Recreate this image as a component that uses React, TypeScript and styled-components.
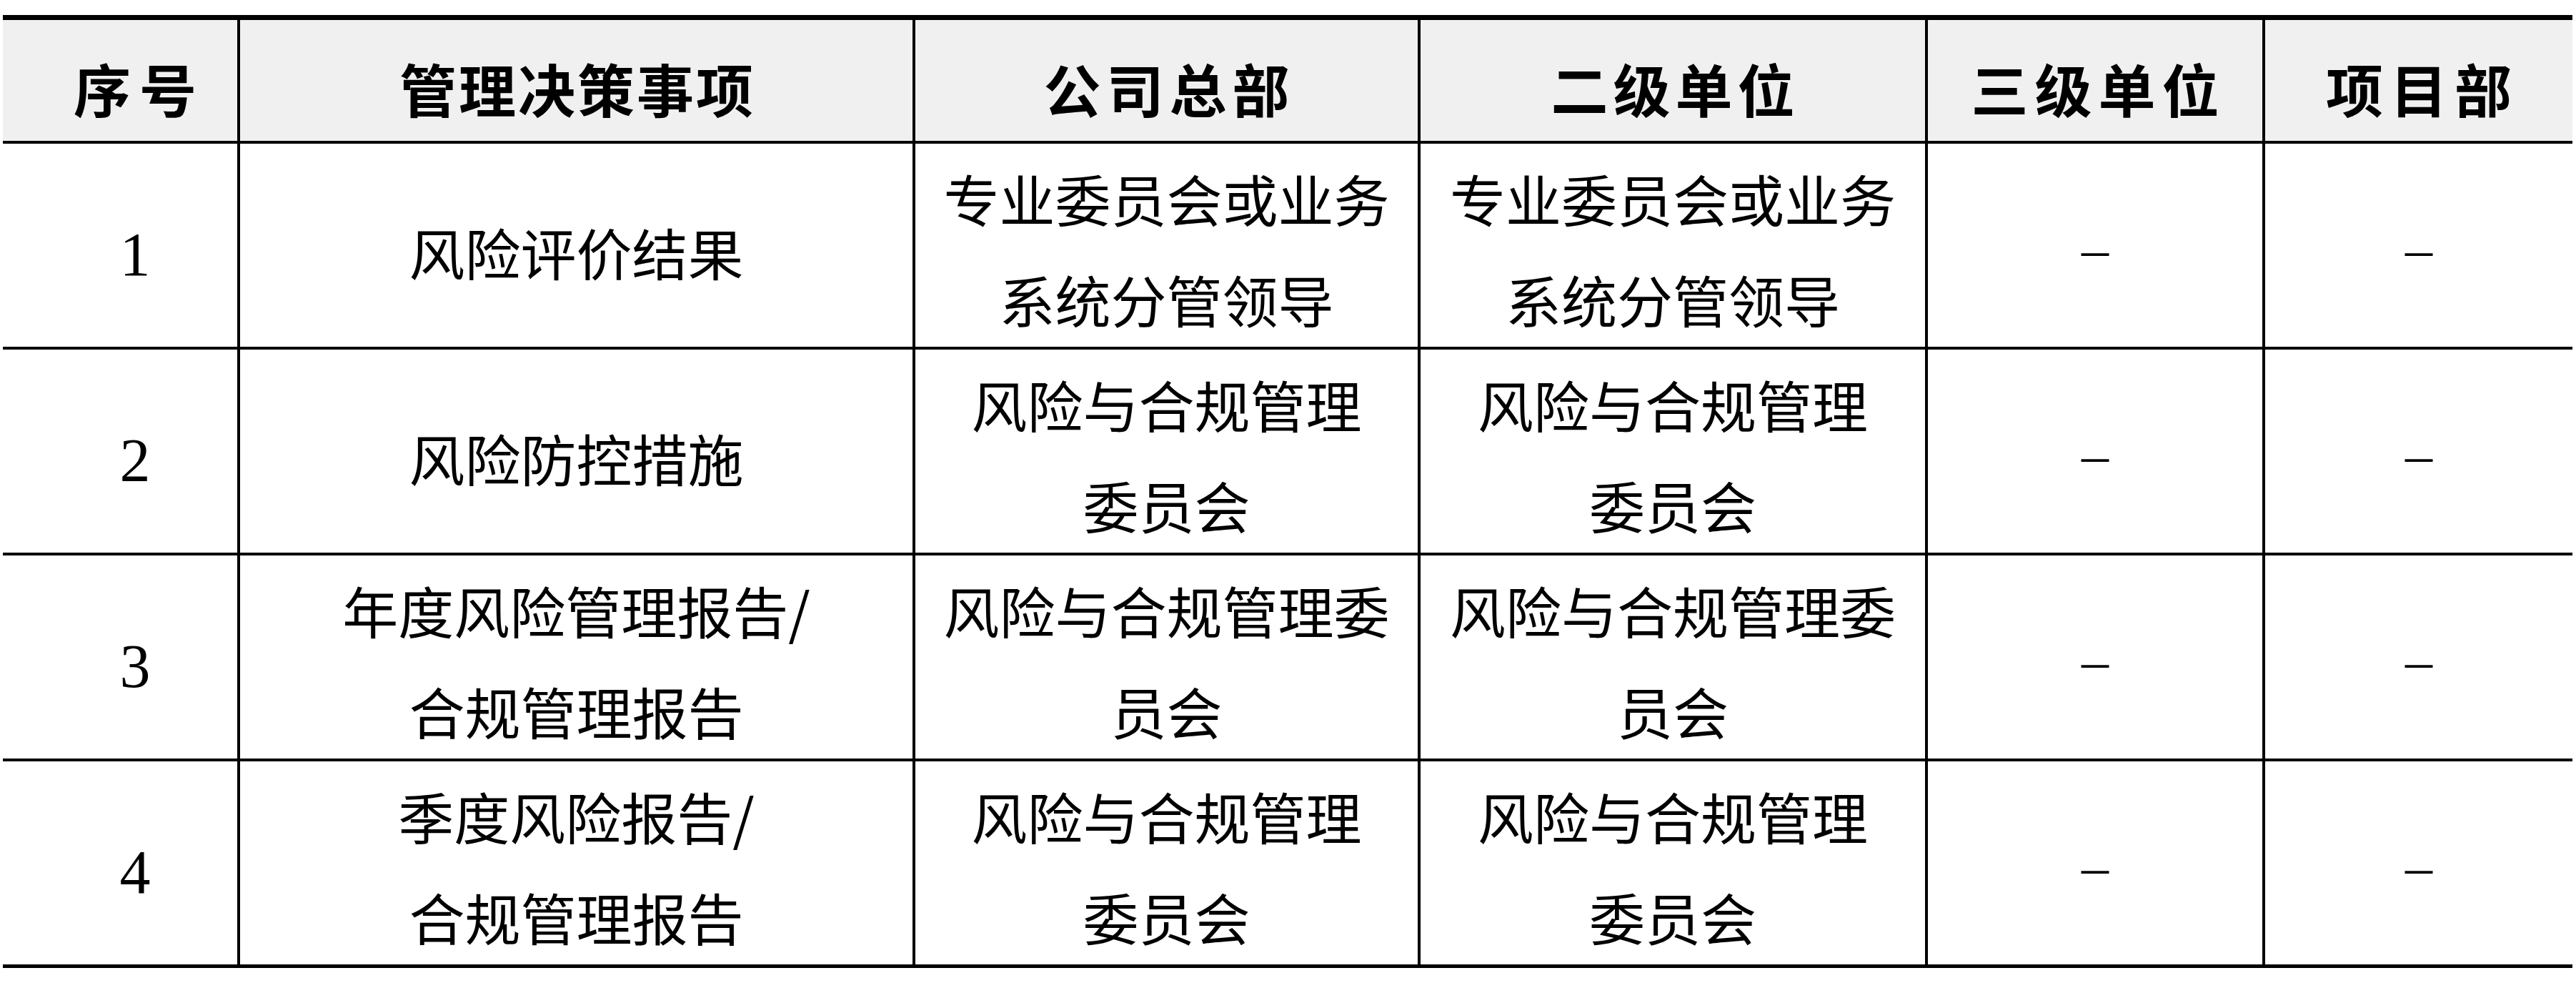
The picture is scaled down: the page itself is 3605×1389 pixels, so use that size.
import React from 'react'
import styled, { createGlobalStyle } from 'styled-components'

const GlobalStyle = createGlobalStyle`
  html, body {
    margin: 0;
    padding: 0;
    background: #ffffff;
  }
  body {
    font-family: "Noto Sans CJK SC", sans-serif;
    color: #000000;
  }
`

const Page = styled.div`
  padding: 21px 0 0 4px;
`

const Grid = styled.div`
  display: grid;
  grid-template-columns: 328px 945px 707px 710px 472px 434px;
  width: 3596px;
`

const HeadCell = styled.div<{ $first?: boolean }>`
  box-sizing: border-box;
  height: 180px;
  background: #f0f0f0;
  border-top: 7px solid #000;
  border-bottom: 4px solid #000;
  border-left: ${(p) => (p.$first ? 'none' : '4px solid #000')};
  padding-left: ${(p) => (p.$first ? '42px' : '0')};
  display: flex;
  align-items: center;
  justify-content: center;
`

const HeadText = styled.span<{ $spacing: number }>`
  display: block;
  padding-top: 18px;
  font-family: "Noto Sans CJK SC", sans-serif;
  font-weight: 700;
  font-size: 80px;
  line-height: 1.2;
  letter-spacing: ${(p) => p.$spacing}px;
  text-indent: ${(p) => p.$spacing}px;
  white-space: nowrap;
`

const Cell = styled.div<{ $first?: boolean; $last?: boolean }>`
  box-sizing: border-box;
  height: ${(p) => (p.$last ? '289px' : '288px')};
  border-bottom: ${(p) => (p.$last ? '5px' : '4px')} solid #000;
  border-left: ${(p) => (p.$first ? 'none' : '4px solid #000')};
  padding-left: ${(p) => (p.$first ? '42px' : '0')};
  display: flex;
  flex-direction: column;
  align-items: center;
  justify-content: center;
  text-align: center;
`

const Num = styled.span`
  display: block;
  padding-top: 28px;
  font-family: "Liberation Serif", "Times New Roman", serif;
  font-size: 86px;
  line-height: 1.2;
`

const Dash = styled.span`
  display: block;
  padding-top: 12px;
  font-family: "Liberation Serif", "Times New Roman", serif;
  font-size: 76px;
  line-height: 1.2;
`

const TextBlock = styled.div<{ $multi: boolean }>`
  padding-top: ${(p) => (p.$multi ? '10px' : '19px')};
  font-family: "Noto Sans CJK SC", sans-serif;
  font-weight: 400;
  font-size: 78px;
  line-height: 141px;
`

const Line = styled.div`
  white-space: nowrap;
`

const headers: { label: string; spacing: number }[] = [
  { label: '序号', spacing: 12 },
  { label: '管理决策事项', spacing: 3 },
  { label: '公司总部', spacing: 8 },
  { label: '二级单位', spacing: 7 },
  { label: '三级单位', spacing: 9 },
  { label: '项目部', spacing: 10 },
]

type Row = {
  no: string
  item: string[]
  hq: string[]
  second: string[]
}

const rows: Row[] = [
  {
    no: '1',
    item: ['风险评价结果'],
    hq: ['专业委员会或业务', '系统分管领导'],
    second: ['专业委员会或业务', '系统分管领导'],
  },
  {
    no: '2',
    item: ['风险防控措施'],
    hq: ['风险与合规管理', '委员会'],
    second: ['风险与合规管理', '委员会'],
  },
  {
    no: '3',
    item: ['年度风险管理报告/', '合规管理报告'],
    hq: ['风险与合规管理委', '员会'],
    second: ['风险与合规管理委', '员会'],
  },
  {
    no: '4',
    item: ['季度风险报告/', '合规管理报告'],
    hq: ['风险与合规管理', '委员会'],
    second: ['风险与合规管理', '委员会'],
  },
]

const Lines = ({ lines }: { lines: string[] }) => (
  <TextBlock $multi={lines.length > 1}>
    {lines.map((l, i) => (
      <Line key={i}>{l}</Line>
    ))}
  </TextBlock>
)

const App = () => {
  return (
    <Page>
      <GlobalStyle />
      <Grid>
        {headers.map((h, i) => (
          <HeadCell key={h.label} $first={i === 0}>
            <HeadText $spacing={h.spacing}>{h.label}</HeadText>
          </HeadCell>
        ))}
        {rows.map((r, ri) => {
          const last = ri === rows.length - 1
          return (
            <React.Fragment key={r.no}>
              <Cell $first $last={last}>
                <Num>{r.no}</Num>
              </Cell>
              <Cell $last={last}>
                <Lines lines={r.item} />
              </Cell>
              <Cell $last={last}>
                <Lines lines={r.hq} />
              </Cell>
              <Cell $last={last}>
                <Lines lines={r.second} />
              </Cell>
              <Cell $last={last}>
                <Dash>–</Dash>
              </Cell>
              <Cell $last={last}>
                <Dash>–</Dash>
              </Cell>
            </React.Fragment>
          )
        })}
      </Grid>
    </Page>
  )
}

export default App
